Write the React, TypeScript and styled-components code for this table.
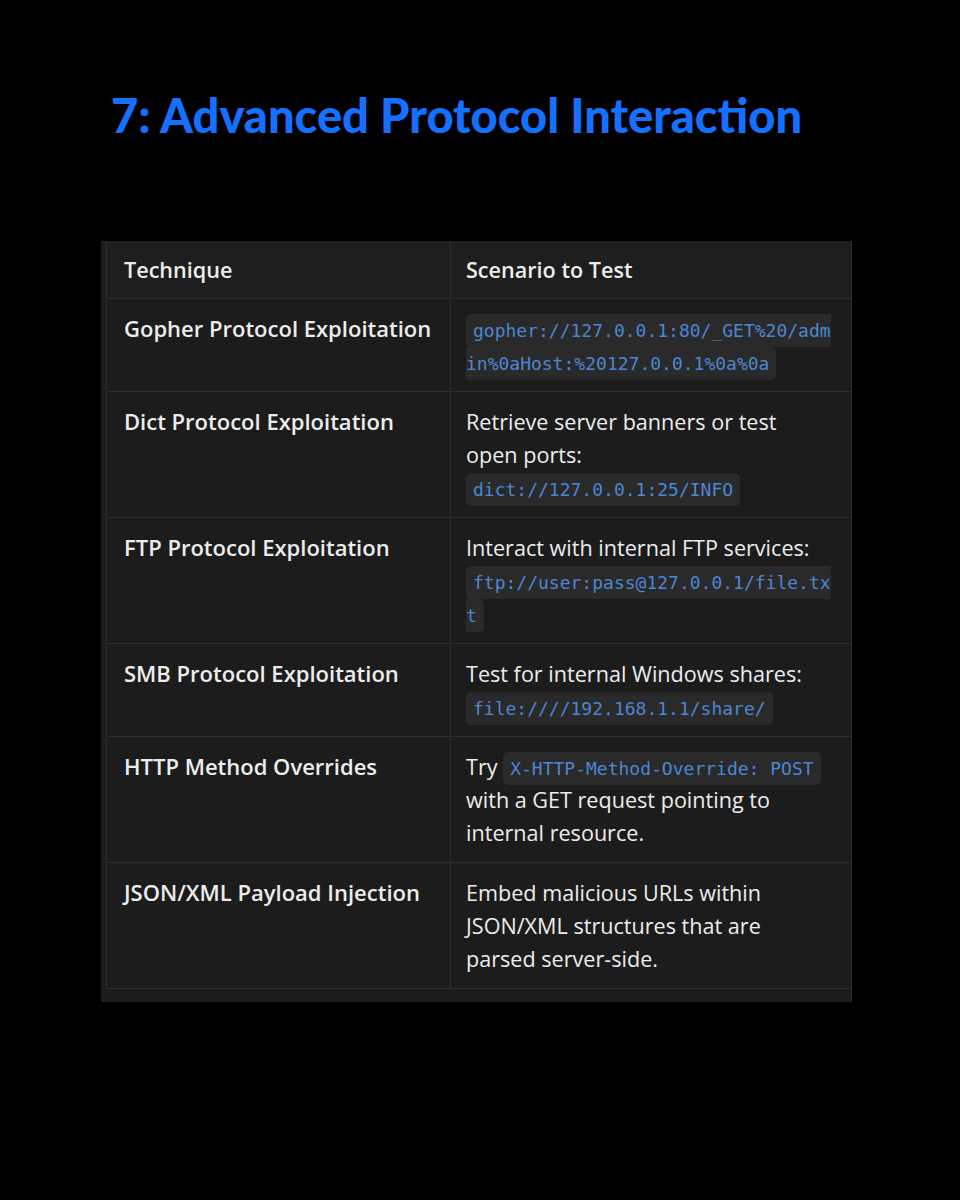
import React from "react";
import styled, { createGlobalStyle } from "styled-components";

const Global = createGlobalStyle`
  html, body { margin: 0; padding: 0; background: #000; }
  body { width: 960px; height: 1200px; overflow: hidden; }
`;

const Page = styled.div`
  width: 960px;
  height: 1200px;
  background: #000;
  display: flex;
  flex-direction: column;
`;

const Title = styled.h1`
  margin: 87px 0 0 111px;
  font-family: "Lato", "Noto Sans", sans-serif;
  font-weight: 900;
  font-size: 47px;
  line-height: 56px;
  color: #1670ff;
  letter-spacing: 0px;
`;

const Panel = styled.div`
  margin: 98px 0 0 101px;
  width: 751px;
  background: #1c1c1c;
  border-right: 1px solid #2c2c2c;
  padding: 0 0 13px 5px;
  box-sizing: border-box;
  overflow: hidden;
`;

const Table = styled.table`
  border-collapse: collapse;
  width: 746px;
  table-layout: fixed;
  border-left: 1px solid #2e2e2e;
  font-family: "Open Sans", "Noto Sans", sans-serif;
  color: #ececec;
  font-size: 21.6px;
  line-height: 33px;
`;

const Col1 = styled.col`
  width: 344px;
`;

const Head = styled.th`
  text-align: left;
  font-weight: 600;
  font-size: 21.6px;
  padding: 12px 16px 12px 17px;
  border-bottom: 1px solid #2e2e2e;
  background: #1e1e1e;
  & + & {
    border-left: 1px solid #2e2e2e;
    padding-left: 15px;
  }
`;

const Cell = styled.td<{ $strong?: boolean }>`
  vertical-align: top;
  padding: 13px 12px 13px 17px;
  border-bottom: 1px solid #2e2e2e;
  font-weight: ${(p) => (p.$strong ? 600 : 400)};
  font-size: ${(p) => (p.$strong ? "22px" : "21.6px")};
  & + & {
    border-left: 1px solid #2e2e2e;
    padding-left: 15px;
    padding-right: 20px;
  }
`;

const Code = styled.code`
  font-family: "DejaVu Sans Mono", "Liberation Mono", monospace;
  font-size: 18px;
  line-height: 20px;
  color: #4d86d2;
  background: #2a2a2a;
  border-radius: 5px;
  padding: 6px 7px 6px 7px;
  word-break: break-all;
`;

const rows: { t: string; s: React.ReactNode }[] = [
  {
    t: "Gopher Protocol Exploitation",
    s: <Code>gopher://127.0.0.1:80/_GET%20/admin%0aHost:%20127.0.0.1%0a%0a</Code>,
  },
  {
    t: "Dict Protocol Exploitation",
    s: (
      <>
        Retrieve server banners or test open ports:
        <br />
        <Code>dict://127.0.0.1:25/INFO</Code>
      </>
    ),
  },
  {
    t: "FTP Protocol Exploitation",
    s: (
      <>
        Interact with internal FTP services:
        <br />
        <Code>ftp://user:pass@127.0.0.1/file.txt</Code>
      </>
    ),
  },
  {
    t: "SMB Protocol Exploitation",
    s: (
      <>
        Test for internal Windows shares:
        <br />
        <Code>file:////192.168.1.1/share/</Code>
      </>
    ),
  },
  {
    t: "HTTP Method Overrides",
    s: (
      <>
        Try <Code>X-HTTP-Method-Override: POST</Code> with a GET request pointing to internal resource.
      </>
    ),
  },
  {
    t: "JSON/XML Payload Injection",
    s: <>Embed malicious URLs within JSON/XML structures that are parsed server-side.</>,
  },
];

export default function App() {
  return (
    <Page>
      <Global />
      <Title>7: Advanced Protocol Interaction</Title>
      <Panel>
        <Table>
          <colgroup>
            <Col1 />
            <col />
          </colgroup>
          <thead>
            <tr>
              <Head>Technique</Head>
              <Head>Scenario to Test</Head>
            </tr>
          </thead>
          <tbody>
            {rows.map((r) => (
              <tr key={r.t}>
                <Cell $strong>{r.t}</Cell>
                <Cell>{r.s}</Cell>
              </tr>
            ))}
          </tbody>
        </Table>
      </Panel>
    </Page>
  );
}
